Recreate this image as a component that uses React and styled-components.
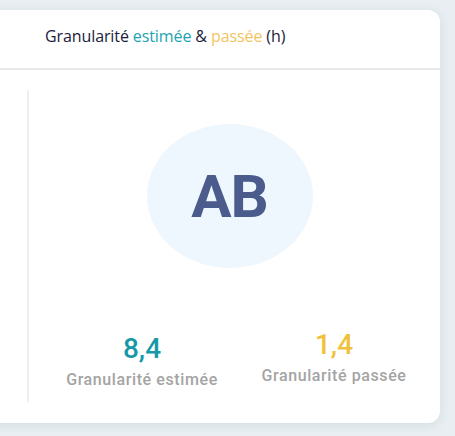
import React from 'react';
import styled, { createGlobalStyle } from 'styled-components';

const GlobalStyle = createGlobalStyle`
  html, body {
    margin: 0;
    padding: 0;
    background: #e8eef1;
    overflow: hidden;
  }
  body {
    font-family: "Noto Sans", "Open Sans", sans-serif;
  }
`;

const Page = styled.div`
  width: 455px;
  height: 436px;
  padding-top: 10px;
  box-sizing: border-box;
`;

const Card = styled.section`
  margin-left: -30px;
  width: 470px;
  height: 413px;
  background: #fff;
  border-radius: 12px;
  box-shadow: 0 2px 10px rgba(120, 150, 165, 0.18);
  display: flex;
  flex-direction: column;
`;

const Header = styled.header`
  height: 60px;
  box-sizing: border-box;
  border-bottom: 2px solid #e9e9e9;
  display: flex;
  align-items: center;
  padding-left: 75px;
  padding-bottom: 6px;
`;

const Title = styled.h2`
  margin: 0;
  font-family: "Open Sans", "Noto Sans", sans-serif;
  font-weight: 400;
  font-size: 16px;
  letter-spacing: -0.1px;
  color: #1b1b3a;
`;

const Tint = styled.span`
  color: ${p => p.$color};
`;

const Body = styled.div`
  flex: 1;
  padding: 20px 10px 21px 57px;
  display: flex;
`;

const Panel = styled.div`
  flex: 1;
  border-left: 2px solid #f0f0f0;
  display: flex;
  flex-direction: column;
  align-items: center;
`;

const Avatar = styled.div`
  margin-top: 34px;
  width: 166px;
  height: 144px;
  border-radius: 50%;
  background: #eef6fe;
  display: flex;
  align-items: center;
  justify-content: center;
  font-family: Roboto, "Liberation Sans", sans-serif;
  font-weight: 700;
  font-size: 60px;
  color: #4b5b8c;
  letter-spacing: -1px;
`;

const Stats = styled.div`
  margin-top: auto;
  margin-bottom: 12px;
  align-self: stretch;
  display: flex;
  padding-left: 17px;
`;

const Stat = styled.div`
  width: 192px;
  display: flex;
  flex-direction: column;
  align-items: center;
  margin-top: ${p => (p.$lift ? '0' : '4px')};
  margin-bottom: ${p => (p.$lift ? '4px' : '0')};
`;

const Value = styled.div`
  font-family: Roboto, "Liberation Sans", sans-serif;
  font-weight: 500;
  font-size: 28px;
  line-height: 34px;
  color: ${p => p.$color};
`;

const Label = styled.div`
  margin-top: 4px;
  font-family: Roboto, "Liberation Sans", sans-serif;
  font-weight: 500;
  font-size: 16px;
  letter-spacing: 0.6px;
  line-height: 20px;
  color: #a4a4a4;
`;

const stats = [
  { value: '8,4', label: 'Granularité estimée', color: '#1598a8' },
  { value: '1,4', label: 'Granularité passée', color: '#f0c23c', lift: true },
];

export default function App() {
  return (
    <Page>
      <GlobalStyle />
      <Card>
        <Header>
          <Title>
            Granularité <Tint $color="#22a3b3">estimée</Tint> &amp;{' '}
            <Tint $color="#f2c462">passée</Tint> (h)
          </Title>
        </Header>
        <Body>
          <Panel>
            <Avatar>AB</Avatar>
            <Stats>
              {stats.map(s => (
                <Stat key={s.label} $lift={s.lift}>
                  <Value $color={s.color}>{s.value}</Value>
                  <Label>{s.label}</Label>
                </Stat>
              ))}
            </Stats>
          </Panel>
        </Body>
      </Card>
    </Page>
  );
}
